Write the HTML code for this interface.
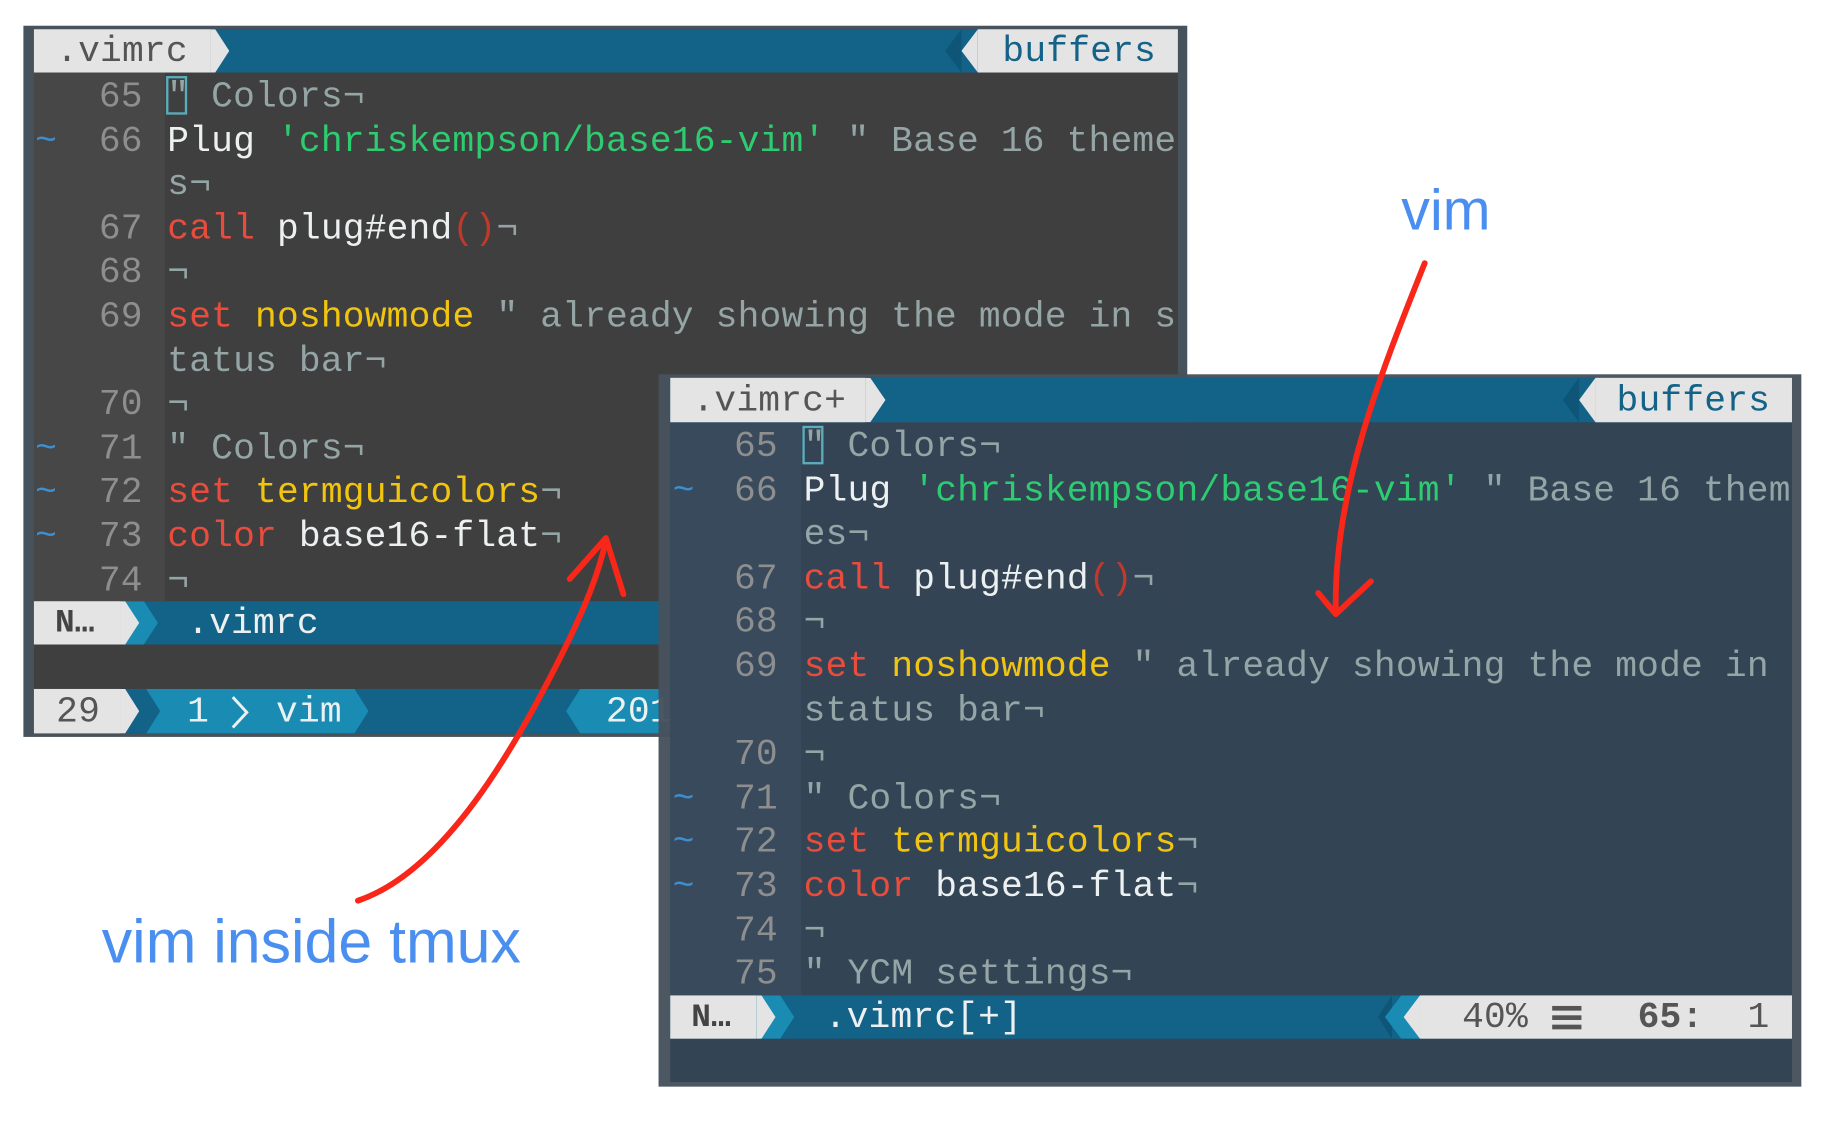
<!DOCTYPE html>
<html><head><meta charset="utf-8"><style>
html,body{margin:0;padding:0;background:#fff;width:1834px;height:1124px;overflow:hidden}
#s{position:absolute;left:0;top:0;width:1570px;height:960px;transform:scale(1.1697);transform-origin:0 0}
.a{position:absolute}
.m{font-family:"Liberation Mono",monospace;font-size:31px;white-space:pre;line-height:38px;letter-spacing:0.15px}
.ln{position:absolute;height:38px;left:0;width:100%;margin-top:3px}
.tl{position:absolute;left:0;color:#3d8fd0}
.nm{position:absolute;left:0;text-align:right;color:#8e8e8e}
.L .nm{width:92px}.L .cd{position:absolute;left:113px}
.R .nm{width:90px}.R .cd{position:absolute;left:112px}
.c{color:#95a5a6}.w{color:#ecf0f1}.r{color:#e74c3c}.y{color:#f1c40f}.g{color:#2ecc71}.p{color:#c0392b}
.b{margin-top:2px}
</style></head><body><div id="s">
<!-- LEFT WINDOW -->
<div class="a" style="left:20px;top:22px;width:995px;height:608px;background:#46525c"></div>
<div class="a" style="left:29px;top:25px;width:978px;height:602px;background:#3f3f3f"></div>
<div class="a" style="left:29px;top:62px;width:112px;height:452px;background:#474747"></div>
<div class="a" style="left:29px;top:25px;width:978px;height:37px;background:#136288"></div>
<div class="a" style="left:29px;top:25px;width:151px;height:37px;background:#e4e4e4"></div>
<svg class="a" style="left:180px;top:25px" width="16" height="37"><polygon points="0,0 4,0 16,18.5 4,37 0,37" fill="#e4e4e4"/></svg>
<div class="a m b" style="left:48px;top:24px;color:#555">.vimrc</div>
<svg class="a" style="left:806px;top:25px" width="30" height="37"><polygon points="16,0 2,18.5 16,37" fill="#0e5577"/><polygon points="30,0 16,18.5 30,37" fill="#e4e4e4"/></svg>
<div class="a" style="left:836px;top:25px;width:171px;height:37px;background:#e4e4e4"></div>
<div class="a m b" style="left:857px;top:24px;color:#136288">buffers</div>
<div class="a m L" style="left:30px;top:62px;width:977px;height:452px;overflow:hidden">
<div class="ln" style="top:0"><span class="nm">65</span><span class="cd c">" Colors¬</span></div>
<div class="ln" style="top:37.6px"><span class="tl">~</span><span class="nm">66</span><span class="cd"><span class="w">Plug </span><span class="g">'chriskempson/base16-vim'</span><span class="c"> " Base 16 theme</span></span></div>
<div class="ln" style="top:75.2px"><span class="cd c">s¬</span></div>
<div class="ln" style="top:112.8px"><span class="nm">67</span><span class="cd"><span class="r">call</span><span class="w"> plug#end</span><span class="p">()</span><span class="c">¬</span></span></div>
<div class="ln" style="top:150.4px"><span class="nm">68</span><span class="cd c">¬</span></div>
<div class="ln" style="top:188px"><span class="nm">69</span><span class="cd"><span class="r">set</span> <span class="y">noshowmode</span><span class="c"> " already showing the mode in s</span></span></div>
<div class="ln" style="top:225.6px"><span class="cd c">tatus bar¬</span></div>
<div class="ln" style="top:263.2px"><span class="nm">70</span><span class="cd c">¬</span></div>
<div class="ln" style="top:300.8px"><span class="tl">~</span><span class="nm">71</span><span class="cd c">" Colors¬</span></div>
<div class="ln" style="top:338.4px"><span class="tl">~</span><span class="nm">72</span><span class="cd"><span class="r">set</span> <span class="y">termguicolors</span><span class="c">¬</span></span></div>
<div class="ln" style="top:376px"><span class="tl">~</span><span class="nm">73</span><span class="cd"><span class="r">color</span><span class="w"> base16-flat</span><span class="c">¬</span></span></div>
<div class="ln" style="top:413.6px"><span class="nm">74</span><span class="cd c">¬</span></div>
</div>
<div class="a" style="left:142px;top:65px;width:18px;height:33px;border:2px solid #5aaebc;box-sizing:border-box"></div>
<!-- left statusline -->
<div class="a" style="left:29px;top:514px;width:978px;height:37px;background:#136288"></div>
<div class="a" style="left:29px;top:514px;width:74px;height:37px;background:#e4e4e4"></div>
<svg class="a" style="left:103px;top:514px" width="40" height="37"><polygon points="0,0 20,0 32,18.5 20,37 0,37" fill="#1a8cb4"/><polygon points="0,0 4,0 16,18.5 4,37 0,37" fill="#e4e4e4"/></svg>
<div class="a m b" style="left:47px;top:513px;color:#444;font-weight:bold;font-size:28px">N…</div>
<div class="a m b" style="left:160px;top:513px;color:#ecf0f1">.vimrc</div>
<!-- tmux bar -->
<div class="a" style="left:29px;top:589px;width:978px;height:38px;background:#136288"></div>
<div class="a" style="left:29px;top:589px;width:74px;height:38px;background:#e4e4e4"></div>
<svg class="a" style="left:103px;top:589px" width="230" height="38"><polygon points="0,0 4,0 16,19 4,38 0,38" fill="#e4e4e4"/><polygon points="22,0 200,0 212,19 200,38 22,38 34,19" fill="#1a8cb4"/></svg>
<svg class="a" style="left:482px;top:589px" width="100" height="38"><polygon points="14,0 100,0 100,38 14,38 2,19" fill="#1a8cb4"/></svg>
<div class="a m b" style="left:48px;top:589px;color:#555">29</div>
<div class="a m b" style="left:160px;top:589px;color:#ecf0f1">1</div>
<svg class="a" style="left:196px;top:594px" width="20" height="30"><polyline points="3,2 15,15 3,28" fill="none" stroke="#ecf0f1" stroke-width="2.5"/></svg>
<div class="a m b" style="left:236px;top:589px;color:#ecf0f1">vim</div>
<div class="a m b" style="left:518px;top:589px;color:#ecf0f1">2017-10-12 mike</div>
<!-- RIGHT WINDOW -->
<div class="a" style="left:563px;top:320px;width:977px;height:609px;background:rgba(70,82,92,0.97)"></div>
<div class="a" style="left:573px;top:323px;width:959px;height:602px;background:rgba(51,68,85,0.96)"></div>
<div class="a" style="left:573px;top:361px;width:112px;height:490px;background:rgba(60,78,96,0.6)"></div>
<div class="a" style="left:573px;top:323px;width:959px;height:38px;background:#136288"></div>
<div class="a" style="left:573px;top:323px;width:167px;height:38px;background:#e4e4e4"></div>
<svg class="a" style="left:740px;top:323px" width="18" height="38"><polygon points="0,0 4,0 17,19 4,38 0,38" fill="#e4e4e4"/></svg>
<div class="a m b" style="left:592px;top:323px;color:#555">.vimrc+</div>
<svg class="a" style="left:1332px;top:323px" width="32" height="38"><polygon points="18,0 4,19 18,38" fill="#0e5577"/><polygon points="32,0 18,19 32,38" fill="#e4e4e4"/></svg>
<div class="a" style="left:1364px;top:323px;width:168px;height:38px;background:#e4e4e4"></div>
<div class="a m b" style="left:1382px;top:323px;color:#136288">buffers</div>
<div class="a m R" style="left:575px;top:361px;width:957px;overflow:hidden;height:490px">
<div class="ln" style="top:0"><span class="nm">65</span><span class="cd c">" Colors¬</span></div>
<div class="ln" style="top:37.6px"><span class="tl">~</span><span class="nm">66</span><span class="cd"><span class="w">Plug </span><span class="g">'chriskempson/base16-vim'</span><span class="c"> " Base 16 them</span></span></div>
<div class="ln" style="top:75.2px"><span class="cd c">es¬</span></div>
<div class="ln" style="top:112.8px"><span class="nm">67</span><span class="cd"><span class="r">call</span><span class="w"> plug#end</span><span class="p">()</span><span class="c">¬</span></span></div>
<div class="ln" style="top:150.4px"><span class="nm">68</span><span class="cd c">¬</span></div>
<div class="ln" style="top:188px"><span class="nm">69</span><span class="cd"><span class="r">set</span> <span class="y">noshowmode</span><span class="c"> " already showing the mode in</span></span></div>
<div class="ln" style="top:225.6px"><span class="cd c">status bar¬</span></div>
<div class="ln" style="top:263.2px"><span class="nm">70</span><span class="cd c">¬</span></div>
<div class="ln" style="top:300.8px"><span class="tl">~</span><span class="nm">71</span><span class="cd c">" Colors¬</span></div>
<div class="ln" style="top:338.4px"><span class="tl">~</span><span class="nm">72</span><span class="cd"><span class="r">set</span> <span class="y">termguicolors</span><span class="c">¬</span></span></div>
<div class="ln" style="top:376px"><span class="tl">~</span><span class="nm">73</span><span class="cd"><span class="r">color</span><span class="w"> base16-flat</span><span class="c">¬</span></span></div>
<div class="ln" style="top:413.6px"><span class="nm">74</span><span class="cd c">¬</span></div>
<div class="ln" style="top:451.2px"><span class="nm">75</span><span class="cd c">" YCM settings¬</span></div>
</div>
<div class="a" style="left:686px;top:364px;width:18px;height:33px;border:2px solid #5aaebc;box-sizing:border-box"></div>
<!-- right statusline -->
<div class="a" style="left:573px;top:851px;width:959px;height:37px;background:#136288"></div>
<div class="a" style="left:573px;top:851px;width:74px;height:37px;background:#e4e4e4"></div>
<svg class="a" style="left:647px;top:851px" width="40" height="37"><polygon points="0,0 20,0 32,18.5 20,37 0,37" fill="#1a8cb4"/><polygon points="0,0 4,0 16,18.5 4,37 0,37" fill="#e4e4e4"/></svg>
<div class="a m b" style="left:591px;top:850px;color:#444;font-weight:bold;font-size:28px">N…</div>
<div class="a m b" style="left:705px;top:850px;color:#ecf0f1">.vimrc[+]</div>
<svg class="a" style="left:1176px;top:851px" width="38" height="37"><polygon points="14,0 2,18.5 14,37" fill="#0e5577"/><polygon points="38,0 22,0 8,18.5 22,37 38,37" fill="#1a8cb4"/><polygon points="38,0 24,18.5 38,37" fill="#e4e4e4"/></svg>
<div class="a" style="left:1214px;top:851px;width:318px;height:37px;background:#e4e4e4"></div>
<div class="a m b" style="left:1250px;top:850px;color:#555">40%</div>
<div class="a" style="left:1327px;top:860px;width:25px;height:4px;background:#555;box-shadow:0 8px 0 #555,0 16px 0 #555"></div>
<div class="a m b" style="left:1400px;top:850px;color:#555;font-weight:bold">65:</div>
<div class="a m b" style="left:1494px;top:850px;color:#555">1</div>
<!-- labels -->
<div class="a" style="left:1198px;top:152px;font-family:'Liberation Sans',sans-serif;font-size:49px;color:#4a8ff0">vim</div>
<div class="a" style="left:87px;top:776px;font-family:'Liberation Sans',sans-serif;font-size:52px;color:#4a8ff0">vim inside tmux</div>
<svg class="a" style="left:0;top:0" width="1570" height="960">
<g fill="none" stroke="#f8271a" stroke-width="5" stroke-linecap="round" stroke-linejoin="round">
<path d="M306 770 C 380 745, 440 640, 480 560 C 500 520, 512 490, 518 462"/>
<path d="M487 495 L518 460 L533 508"/>
<path d="M1218 225 C 1180 320, 1140 420, 1142 522"/>
<path d="M1127 507 L1142 525 L1172 497"/>
</g></svg>
</div></body></html>
